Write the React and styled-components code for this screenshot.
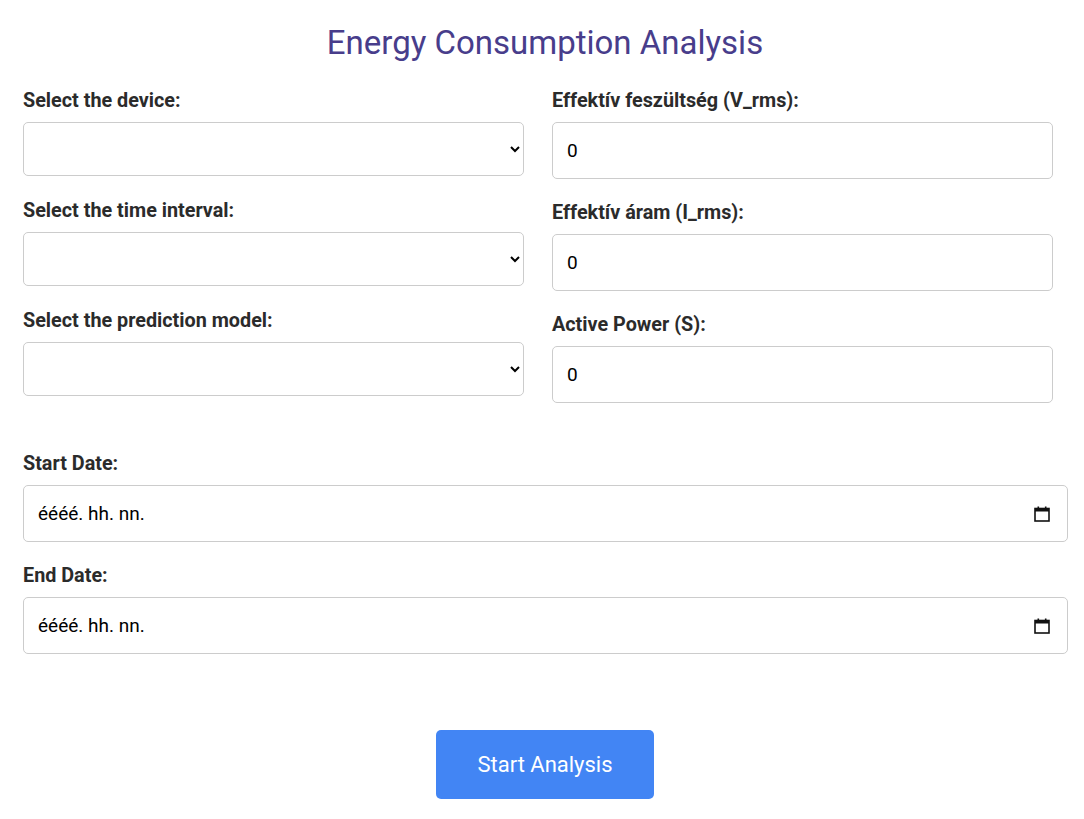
import React from 'react';
import styled, { createGlobalStyle } from 'styled-components';

const GlobalStyle = createGlobalStyle`
  body {
    margin: 0;
    background: #ffffff;
    font-family: Roboto, "Liberation Sans", sans-serif;
  }
`;

const Page = styled.div`
  width: 1044px;
  padding: 22px 17px 20px 23px;
`;

const Title = styled.h1`
  margin: 0 0 25px;
  text-align: center;
  font-size: 33px;
  font-weight: 400;
  line-height: 42px;
  color: #483d8b;
`;

const Columns = styled.div`
  display: grid;
  grid-template-columns: 501px 501px;
  column-gap: 28px;
`;

const Column = styled.div`
  display: flex;
  flex-direction: column;
`;

const Field = styled.div`
  display: flex;
  flex-direction: column;
  margin-bottom: ${(p) => p.$gap || 0}px;
`;

const Label = styled.label`
  font-size: 19.8px;
  font-weight: 700;
  color: #2b2b2b;
  line-height: 23px;
  margin-bottom: 10px;
`;

const Select = styled.select`
  height: 54px;
  width: 100%;
  border: 1px solid #cccccc;
  border-radius: 5px;
  background: #fff;
  font-family: inherit;
  font-size: 19px;
  padding: 0 15px 0 8px;
  color: #000;
`;

const NumberInput = styled.input`
  box-sizing: border-box;
  height: 57px;
  width: 100%;
  border: 1px solid #cccccc;
  border-radius: 5px;
  padding: 0 14px;
  font-family: inherit;
  font-size: 19px;
  color: #000;
`;

const DateSection = styled.div`
  margin-top: 49px;
  display: flex;
  flex-direction: column;
`;

const DateBox = styled.div`
  box-sizing: border-box;
  height: 57px;
  width: 1045px;
  border: 1px solid #cccccc;
  border-radius: 5px;
  display: flex;
  align-items: center;
  justify-content: space-between;
  padding: 0 16px 0 14px;
  font-size: 19px;
  color: #000;
`;

const ButtonRow = styled.div`
  display: flex;
  justify-content: center;
  margin-top: 76px;
`;

const Button = styled.button`
  width: 218px;
  height: 69px;
  border: none;
  border-radius: 5px;
  background: #4285f4;
  color: #ffffff;
  font-family: inherit;
  font-size: 22px;
  cursor: pointer;
`;

const CalendarIcon = () => (
  <svg width="18" height="18" viewBox="0 0 18 18" fill="none">
    <rect x="2" y="3.5" width="14" height="12.5" stroke="#111" strokeWidth="1.6" />
    <rect x="2" y="3.5" width="14" height="3" fill="#111" />
    <rect x="4.5" y="1.5" width="1.6" height="3" fill="#111" />
    <rect x="11.9" y="1.5" width="1.6" height="3" fill="#111" />
  </svg>
);

const left = ['Select the device:', 'Select the time interval:', 'Select the prediction model:'];
const right = ['Effektív feszültség (V_rms):', 'Effektív áram (I_rms):', 'Active Power (S):'];

const App = () => (
  <Page>
    <GlobalStyle />
    <Title>Energy Consumption Analysis</Title>
    <Columns>
      <Column>
        {left.map((label, i) => (
          <Field key={label} $gap={i < 2 ? 23 : 0}>
            <Label>{label}</Label>
            <Select defaultValue="">
              <option value="" />
            </Select>
          </Field>
        ))}
      </Column>
      <Column>
        {right.map((label, i) => (
          <Field key={label} $gap={i < 2 ? 22 : 0}>
            <Label>{label}</Label>
            <NumberInput type="number" defaultValue={0} />
          </Field>
        ))}
      </Column>
    </Columns>
    <DateSection>
      <Field $gap={22}>
        <Label>Start Date:</Label>
        <DateBox>
          <span>éééé. hh. nn.</span>
          <CalendarIcon />
        </DateBox>
      </Field>
      <Field>
        <Label>End Date:</Label>
        <DateBox>
          <span>éééé. hh. nn.</span>
          <CalendarIcon />
        </DateBox>
      </Field>
    </DateSection>
    <ButtonRow>
      <Button>Start Analysis</Button>
    </ButtonRow>
  </Page>
);

export default App;
